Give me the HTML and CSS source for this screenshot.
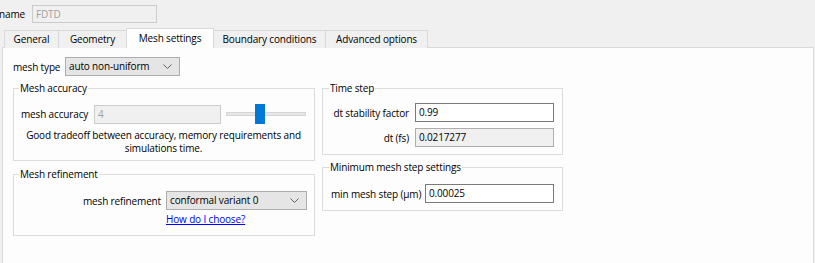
FILE: index.html
```html
<!DOCTYPE html>
<html>
<head>
<meta charset="utf-8">
<link rel="stylesheet" href="styles.css">
</head>
<body>
<div class="top">
  <span class="name-label">name</span>
  <div class="field disabled name-field">FDTD</div>
</div>
<div class="tabs">
  <div class="tab t-general">General</div>
  <div class="tab t-geom">Geometry</div>
  <div class="tab t-mesh selected">Mesh settings</div>
  <div class="tab t-bound">Boundary conditions</div>
  <div class="tab t-adv">Advanced options</div>
</div>
<div class="pane">
  <div class="type-row">
    <span class="lbl">mesh type</span>
    <div class="select type-select"><span>auto non-uniform</span><svg width="9" height="5" viewBox="0 0 9 5"><polyline points="0.5,0.5 4.5,4.5 8.5,0.5" fill="none" stroke="#606060" stroke-width="1"/></svg></div>
  </div>
  <div class="cols">
    <div class="col">
      <fieldset class="group acc">
        <legend>Mesh accuracy</legend>
        <div class="acc-row">
          <span class="lbl acc-lbl">mesh accuracy</span>
          <div class="field disabled acc-field">4</div>
          <div class="slider"><div class="track"></div><div class="handle"></div></div>
        </div>
        <p class="note">Good tradeoff between accuracy, memory requirements and<br>simulations time.</p>
      </fieldset>
      <fieldset class="group refine">
        <legend>Mesh refinement</legend>
        <div class="ref-grid">
          <span class="lbl right">mesh refinement</span>
          <div class="select ref-select"><span>conformal variant 0</span><svg width="9" height="5" viewBox="0 0 9 5"><polyline points="0.5,0.5 4.5,4.5 8.5,0.5" fill="none" stroke="#606060" stroke-width="1"/></svg></div>
          <span></span>
          <a class="link" href="#">How do I choose?</a>
        </div>
      </fieldset>
    </div>
    <div class="col">
      <fieldset class="group time">
        <legend>Time step</legend>
        <div class="time-grid">
          <span class="lbl right">dt stability factor</span>
          <div class="field">0.99</div>
          <span class="lbl right">dt (fs)</span>
          <div class="field readonly">0.0217277</div>
        </div>
      </fieldset>
      <fieldset class="group minstep">
        <legend>Minimum mesh step settings</legend>
        <div class="min-row">
          <span class="lbl">min mesh step (µm)</span>
          <div class="field min-field">0.00025</div>
        </div>
      </fieldset>
    </div>
  </div>
</div>
</body>
</html>
```
FILE: styles.css
```css
* { box-sizing: border-box; }
html, body {
  margin: 0;
  padding: 0;
  background: #f0f0f0;
  overflow: hidden;
}
body {
  font-family: "Segoe UI", "Open Sans", "Noto Sans", sans-serif;
  font-size: 10px;
  letter-spacing: -0.15px;
  color: #000;
  width: 815px;
  height: 263px;
}
.top {
  display: flex;
  align-items: center;
  height: 24px;
  padding-top: 3px;
}
.name-label {
  margin-left: -1px;
  width: 33px;
  line-height: 18px;
}
.field {
  height: 19px;
  border: 1px solid #7a7a7a;
  background: #fff;
  padding: 0 3px;
  line-height: 17px;
  white-space: nowrap;
  overflow: hidden;
}
.field.disabled {
  border-color: #cccccc;
  background: #f0f0f0;
  color: #a0a0a0;
}
.field.readonly {
  border-color: #adadad;
  background: #f0f0f0;
}
.name-field {
  width: 125px;
  height: 18px;
  line-height: 16px;
}
.tabs {
  display: flex;
  align-items: flex-end;
  padding-left: 4px;
  margin-top: 4px;
  height: 20px;
  position: relative;
  z-index: 1;
}
.tab {
  height: 18px;
  border: 1px solid #d9d9d9;
  border-bottom: none;
  border-right: none;
  background: #f0f0f0;
  line-height: 16px;
  text-align: center;
}
.tab.selected {
  height: 20px;
  background: #fff;
  border-right: 1px solid #d9d9d9;
  line-height: 18px;
}
.t-adv { border-right: 1px solid #d9d9d9; }
.t-general { width: 54px; }
.t-geom { width: 68px; }
.t-mesh { width: 88px; }
.t-bound { width: 111px; border-left: none; }
.t-adv { width: 103px; }
.pane {
  margin-left: 2px;
  width: 812px;
  height: 217px;
  margin-top: -1px;
  border: 1px solid #d9d9d9;
  border-bottom: none;
  background: #fdfdfd;
  padding: 9px 0 0 10px;
}
.type-row {
  display: flex;
  align-items: center;
  height: 19px;
}
.lbl { white-space: nowrap; line-height: 14px; }
.right { text-align: right; }
.type-row .lbl { width: 52px; }
.select {
  display: flex;
  align-items: center;
  justify-content: space-between;
  height: 19px;
  border: 1px solid #adadad;
  background: #e5e5e5;
  padding: 0 7px 0 3px;
  line-height: 17px;
}
.type-select { width: 115px; }
.cols {
  display: grid;
  grid-template-columns: 302px 241px;
  column-gap: 7px;
  margin-top: 5px;
}
.col { display: flex; flex-direction: column; }
.group {
  margin: 0;
  padding: 0;
  border: 1px solid #dcdcdc;
  min-width: 0;
}
.group legend {
  margin-left: -2px;
  padding: 0 1px;
  line-height: 14px;
}
.acc { padding: 9px 8px 5px 7px; }
.acc-row { display: flex; align-items: center; height: 20px; }
.acc-lbl { width: 73px; }
.acc-field { width: 127px; }
.slider {
  position: relative;
  width: 80px;
  height: 20px;
  margin-left: 5px;
}
.track {
  position: absolute;
  left: 0; right: 0;
  top: 8px;
  height: 4px;
  background: #e7e7e7;
  border: 1px solid #d6d6d6;
}
.handle {
  position: absolute;
  left: 29px;
  top: 0;
  width: 10px;
  height: 20px;
  background: #0078d7;
}
.note {
  margin: 5px 0 0 0;
  text-align: center;
  line-height: 13px;
}
.refine {
  margin-top: 6px;
  padding: 10px 7px 9px 7px;
}
.ref-grid {
  display: grid;
  grid-template-columns: 1fr 141px;
  column-gap: 5px;
  row-gap: 2px;
  align-items: center;
}
.link {
  color: #0000ff;
  text-decoration: underline;
  line-height: 14px;
}
.time { padding: 8px 8px 7px 8px; }
.time-grid {
  display: grid;
  grid-template-columns: 1fr 139px;
  column-gap: 6px;
  row-gap: 6px;
  align-items: center;
}
.minstep {
  margin-top: 5px;
  padding: 10px 8px 7px 8px;
}
.min-row { display: flex; align-items: center; justify-content: space-between; }
.min-field { width: 129px; }
```
